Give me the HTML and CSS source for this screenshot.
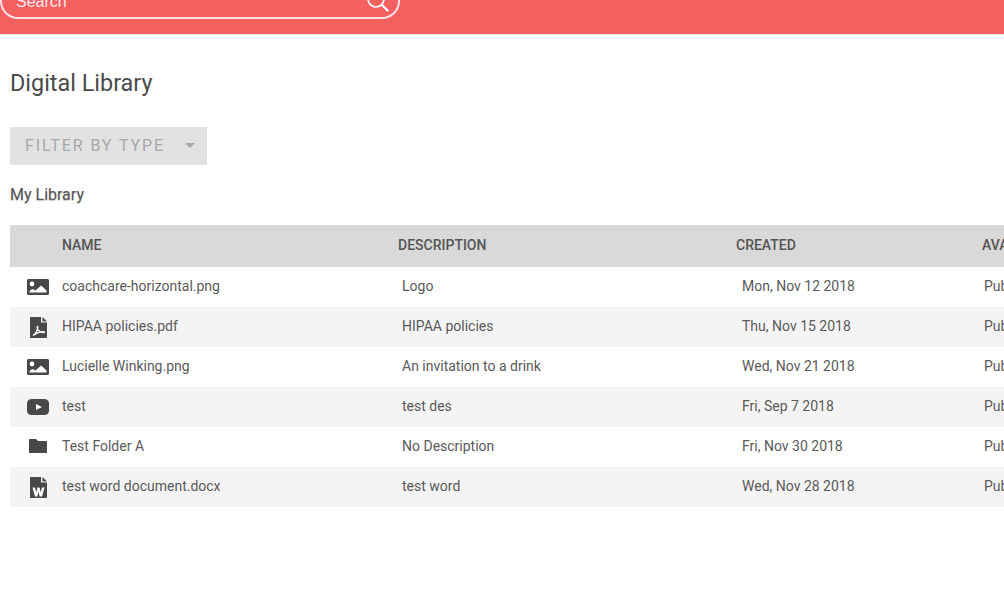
FILE: index.html
```html
<!DOCTYPE html>
<html lang="en">
<head>
<meta charset="utf-8">
<title>Digital Library</title>
<link rel="stylesheet" href="styles.css">
</head>
<body>
<header class="topbar">
  <div class="search">
    <span class="search-text">Search</span>
    <svg class="search-icon" viewBox="0 0 24 24" width="24" height="24"><circle cx="10" cy="10" r="8" fill="none" stroke="#fff" stroke-width="1.6"/><path d="M16 16l5.500 5.500" stroke="#fff" stroke-width="2.400" stroke-linecap="round"/></svg>
  </div>
</header>
<main class="content">
  <h1 class="title">Digital Library</h1>
  <div class="filter"><span class="filter-label">FILTER BY TYPE</span><span class="caret"></span></div>
  <h2 class="subtitle">My Library</h2>
  <div class="table">
    <div class="row head">
      <span></span><span>NAME</span><span>DESCRIPTION</span><span>CREATED</span><span>AVAILABILITY</span>
    </div>
    <div class="row item">
      <span class="ic"><svg viewBox="0 0 22 16" width="22" height="16"><use href="#i-image"/></svg></span>
      <span>coachcare-horizontal.png</span><span class="d">Logo</span><span class="c">Mon, Nov 12 2018</span><span class="a">Public</span>
    </div>
    <div class="row item alt">
      <span class="ic"><svg viewBox="0 0 17 21" width="17" height="21"><use href="#i-pdf"/></svg></span>
      <span>HIPAA policies.pdf</span><span class="d">HIPAA policies</span><span class="c">Thu, Nov 15 2018</span><span class="a">Public</span>
    </div>
    <div class="row item">
      <span class="ic"><svg viewBox="0 0 22 16" width="22" height="16"><use href="#i-image"/></svg></span>
      <span>Lucielle Winking.png</span><span class="d">An invitation to a drink</span><span class="c">Wed, Nov 21 2018</span><span class="a">Public</span>
    </div>
    <div class="row item alt">
      <span class="ic"><svg viewBox="0 0 22 16" width="22" height="16"><path fill="#484848" d="M5 0h12c3 0 5 1.500 5 4.500v7c0 3-2 4.500-5 4.500H5c-3 0-5-1.500-5-4.500v-7C0 1.500 2 0 5 0z"/><path fill="#fff" d="M9 5l6 3-6 3z"/></svg></span>
      <span>test</span><span class="d">test des</span><span class="c">Fri, Sep 7 2018</span><span class="a">Public</span>
    </div>
    <div class="row item">
      <span class="ic"><svg class="folder" viewBox="0 0 18 14" width="18" height="14"><path fill="#484848" d="M1 0h6l2 2h8c.6 0 1 .4 1 1v10c0 .6-.4 1-1 1H1c-.6 0-1-.4-1-1V1c0-.6.4-1 1-1z"/></svg></span>
      <span>Test Folder A</span><span class="d">No Description</span><span class="c">Fri, Nov 30 2018</span><span class="a">Public</span>
    </div>
    <div class="row item alt">
      <span class="ic"><svg viewBox="0 0 17 21" width="17" height="21"><path fill="#484848" d="M1 0h10v5.500h6V20c0 .6-.4 1-1 1H1c-.6 0-1-.4-1-1V1c0-.6.4-1 1-1zM12.500 0L17 4.500h-4.500z"/><path fill="#fff" d="M2.500 10.500h2.500l1.200 5 1.300-5h2l1.300 5 1.200-5h2.500l-2.500 9H9.700l-1.200-4.500-1.200 4.500H5z"/></svg></span>
      <span>test word document.docx</span><span class="d">test word</span><span class="c">Wed, Nov 28 2018</span><span class="a">Public</span>
    </div>
  </div>
</main>
<svg class="defs" width="0" height="0">
  <defs>
    <g id="i-image"><path fill="#484848" d="M1.500 0h19c.8 0 1.500.7 1.500 1.500v13c0 .8-.7 1.500-1.500 1.500h-19C.7 16 0 15.300 0 14.500v-13C0 .7.7 0 1.500 0z"/><circle cx="5" cy="5" r="2.400" fill="#fff"/><path fill="#fff" d="M2.500 13.500v-1c1.300-2 2.800-2.800 4.200-2l1.800 1 4.700-4.300c.6-.5 1.200-.5 1.800 0l4.500 4.300v2z"/></g>
    <g id="i-pdf"><path fill="#484848" d="M1 0h10v5.500h6V20c0 .6-.4 1-1 1H1c-.6 0-1-.4-1-1V1c0-.6.4-1 1-1zM12.500 0L17 4.500h-4.500z"/><path fill="none" stroke="#fff" stroke-width="1.300" d="M3 18.500c2-1 4-4 4.800-8 .3-1.500-.7-1.500-.7 0 0 2 3 5.200 6.400 5.200 1.300 0 1.300-1-.2-1-3 0-6.800 1.200-10.300 3.800z"/></g>
  </defs>
</svg>
</body>
</html>
```
FILE: styles.css
```css
* { box-sizing: border-box; }
html, body { margin: 0; height: 100%; overflow: hidden; }
body { background: #fff; font-family: Roboto, sans-serif; color: #5a5a5a; width: 1004px; }
.topbar { height: 34px; background: #f45f5f; overflow: hidden; display: flex; align-items: flex-end; padding-bottom: 15px; box-shadow: 0 1px 1px rgba(0,0,0,.08); }
.search { flex: none; width: 400px; height: 40px; border: 2px solid #fbe3e3; border-radius: 18px; display: flex; align-items: center; justify-content: space-between; padding: 0 10px 0 14px; }
.search-text { font-family: "Liberation Sans", Arial, sans-serif; font-size: 16px; color: #fde9e9; position: relative; top: 3px; }
.search-icon { position: relative; top: 2px; left: 2px; }
.content { padding: 0 0 0 10px; }
.title { margin: 34px 0 0; font-size: 23.4px; font-weight: 400; line-height: 30px; color: #4a4a4a; }
.filter { margin-top: 29px; width: 197px; height: 38px; background: #e2e2e2; display: flex; align-items: center; padding: 0 0 2px 15px; }
.filter-label { font-size: 16px; font-weight: 400; letter-spacing: 1.9px; color: #a8a8a8; }
.caret { margin-left: 20px; width: 0; height: 0; border-left: 5px solid transparent; border-right: 5px solid transparent; border-top: 5px solid #a8a8a8; }
.subtitle { margin: 19px 0 0; font-size: 16px; font-weight: 400; line-height: 22px; color: #555; text-shadow: 0 1px 1px rgba(0,0,0,.25); }
.table { margin-top: 19px; width: 1200px; font-size: 14px; }
.row { display: grid; grid-template-columns: 52px 336px 338px 246px 1fr; align-items: center; white-space: nowrap; }
.head { height: 42px; background: #d9d9d9; font-weight: 500; font-size: 14px; padding-bottom: 2px; color: #555; }
.item { height: 40px; background: #fff; padding-bottom: 2px; }
.item.alt { background: #f4f4f4; }
.ic { display: flex; justify-content: center; padding-left: 4px; position: relative; top: 1px; }
.folder { margin-top: -2px; }
.d { padding-left: 4px; }
.c { padding-left: 6px; }
.a { padding-left: 2px; }
.defs { position: absolute; }
```
